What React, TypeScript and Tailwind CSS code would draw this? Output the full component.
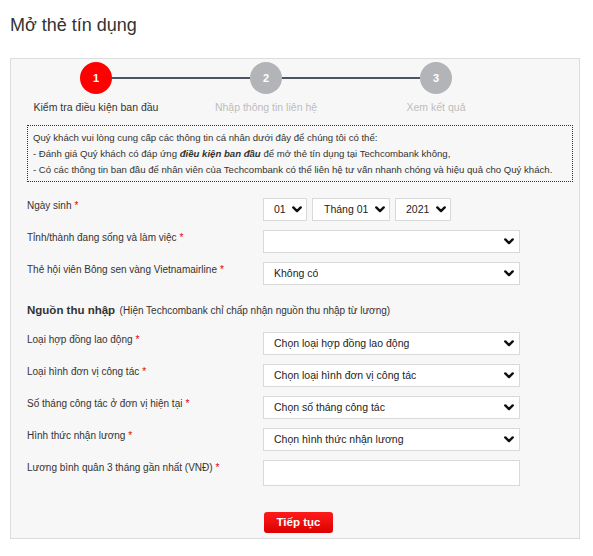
const STEPS = [
  { n: "1", label: "Kiểm tra điều kiện ban đầu", active: true },
  { n: "2", label: "Nhập thông tin liên hệ", active: false },
  { n: "3", label: "Xem kết quả", active: false },
];

const INCOME_ROWS = [
  { label: "Loại hợp đồng lao động", value: "Chọn loại hợp đồng lao động" },
  { label: "Loại hình đơn vị công tác", value: "Chọn loại hình đơn vị công tác" },
  { label: "Số tháng công tác ở đơn vị hiện tại", value: "Chọn số tháng công tác" },
  { label: "Hình thức nhận lương", value: "Chọn hình thức nhận lương" },
];

function Chevron() {
  return (
    <svg width="10" height="7" viewBox="0 0 10 7" className="shrink-0">
      <polyline points="1.3,1.4 5,5.1 8.7,1.4" fill="none" stroke="#111" strokeWidth="2.4" strokeLinecap="round" strokeLinejoin="round" />
    </svg>
  );
}

function FakeSelect({ value, className }: { value?: string; className: string }) {
  return (
    <div className={`flex h-[23px] items-center justify-between border border-[#d9d9d9] bg-white pl-[10px] pr-[4px] text-[10.5px] text-[#222] ${className}`}>
      <span className="truncate">{value}</span>
      <Chevron />
    </div>
  );
}

function Req() {
  return <span className="ml-[3px] text-[#e30000]">*</span>;
}

function Row({ label, children }: { label: string; children: React.ReactNode }) {
  return (
    <div className="flex">
      <div className="w-[236px] shrink-0 text-[10px] leading-[15px] text-[#333]">
        {label}
        <Req />
      </div>
      {children}
    </div>
  );
}

export default function App() {
  return (
    <div className="min-h-[556px] bg-white font-['Liberation_Sans',Arial,sans-serif]">
      <h1 className="px-[10px] pt-[12px] text-[18px] leading-[26px] text-[#333]">Mở thẻ tín dụng</h1>

      <div className="ml-[10px] mt-[20px] w-[570px] border border-[#dcdcdc] bg-[#f7f7f7] pb-[5px]">
        {/* steps */}
        <div className="flex pt-[3px]">
          {STEPS.map((s, i) => (
            <div key={s.n} className="flex w-[170px] flex-col items-center">
              <div className="flex w-full items-center">
                <div className={`h-[2px] flex-1 ${i === 0 ? "" : "bg-[#4d5562]"}`} />
                <div
                  className={`grid h-[32px] w-[32px] place-items-center rounded-full text-[11px] font-bold text-white ${
                    s.active ? "bg-[#ff0000]" : "bg-[#b3b4b8]"
                  }`}
                >
                  {s.n}
                </div>
                <div className={`h-[2px] flex-1 ${i === STEPS.length - 1 ? "" : "bg-[#4d5562]"}`} />
              </div>
              <span className={`mt-[6px] text-[10.5px] leading-[14px] ${s.active ? "text-[#333]" : "text-[#bdbdbd]"}`}>
                {s.label}
              </span>
            </div>
          ))}
        </div>

        {/* info */}
        <div className="ml-[16px] mt-[11px] w-[546px] whitespace-nowrap border border-dotted border-[#333] pb-[3px] pl-[5px] pt-[4px] text-[9.6px] leading-[16px] text-[#333]">
          <p>Quý khách vui lòng cung cấp các thông tin cá nhân dưới đây để chúng tôi có thể:</p>
          <p>
            - Đánh giá Quý khách có đáp ứng <b className="italic">điều kiện ban đầu</b> để mở thẻ tín dụng tại Techcombank không,
          </p>
          <p>- Có các thông tin ban đầu để nhân viên của Techcombank có thể liên hệ tư vấn nhanh chóng và hiệu quả cho Quý khách.</p>
        </div>

        {/* form */}
        <div className="mt-[16px] flex flex-col gap-[9px] pl-[16px]">
          <Row label="Ngày sinh">
            <div className="flex gap-[5px]">
              <FakeSelect value="01" className="w-[44px]" />
              <FakeSelect value="Tháng 01" className="w-[78px] pl-[11px]" />
              <FakeSelect value="2021" className="w-[56px]" />
            </div>
          </Row>
          <Row label="Tỉnh/thành đang sống và làm việc">
            <FakeSelect className="w-[257px] pr-[5px]" />
          </Row>
          <Row label="Thẻ hội viên Bông sen vàng Vietnamairline">
            <FakeSelect value="Không có" className="w-[257px] pr-[5px]" />
          </Row>
        </div>

        <div className="mb-[13px] mt-[16px] pl-[16px] leading-[16px] text-[#333]">
          <span className="text-[11.5px] font-bold">Nguồn thu nhập</span>{" "}
          <span className="text-[10px]">(Hiện Techcombank chỉ chấp nhận nguồn thu nhập từ lương)</span>
        </div>

        <div className="flex flex-col gap-[9px] pl-[16px]">
          {INCOME_ROWS.map((r) => (
            <Row key={r.label} label={r.label}>
              <FakeSelect value={r.value} className="w-[257px] pr-[5px]" />
            </Row>
          ))}
          <Row label="Lương bình quân 3 tháng gần nhất (VNĐ)">
            <div className="h-[26px] w-[257px] border border-[#d9d9d9] bg-white" />
          </Row>
        </div>

        <div className="mt-[23px] pl-[253px]">
          <button className="h-[21px] w-[69px] rounded-[3px] bg-linear-to-b from-[#ff1a1a] to-[#dc0000] text-[11.5px] font-bold text-white">
            Tiếp tục
          </button>
        </div>
      </div>
    </div>
  );
}
